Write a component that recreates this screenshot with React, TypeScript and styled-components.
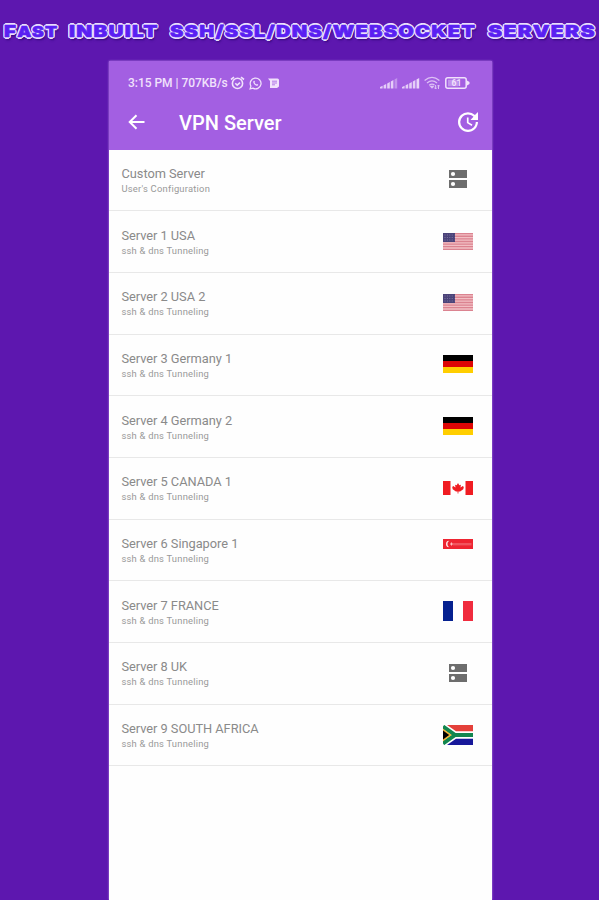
import React from "react";
import styled, { createGlobalStyle } from "styled-components";

const GlobalStyle = createGlobalStyle`
  *, *::before, *::after { box-sizing: border-box; }
  body { margin: 0; background: #5d17af; font-family: Roboto, "Liberation Sans", sans-serif; }
`;

const Page = styled.main`
  display: flex;
  flex-direction: column;
  width: 599px;
  height: 900px;
  overflow: hidden;
  background: #5d17af;
`;

const Headline = styled.h1`
  display: flex;
  height: 61px;
  flex: none;
  margin: 0;
  padding: 20.5px 0 0 4px;
  gap: 9.5px;
  font: 900 16.3px/20px Inter, Roboto, sans-serif;
  color: #5a1ff2;
  white-space: pre;
`;

const Word = styled.span<{ $width: number; $stretch: number }>`
  width: ${(p) => p.$width}px;
  flex: none;

  & > span {
    display: inline-block;
    letter-spacing: 1px;
    transform: scaleX(${(p) => p.$stretch});
    transform-origin: left;
    -webkit-text-stroke: 0.6px #5a1ff2;
    text-shadow:
      1.3px 0 0.5px #eadffd, -1.3px 0 0.5px #eadffd,
      0 1.6px 0.5px #eadffd, 0 -1.6px 0.5px #eadffd,
      1.1px 1.3px 0.5px #eadffd, -1.1px 1.3px 0.5px #eadffd,
      1.1px -1.3px 0.5px #eadffd, -1.1px -1.3px 0.5px #eadffd,
      1px 2.5px 2px #32077a;
  }

  & small { font-size: 14.2px; }
`;

const Phone = styled.section`
  display: flex;
  flex-direction: column;
  flex: 1;
  width: 383px;
  margin-left: 109px;
  background: #fefefe;
  box-shadow: 0 0 2px #b68be6;
`;

const Header = styled.header`
  height: 88.5px;
  flex: none;
  background: #a35fe2;
  color: #fff;
`;

const StatusBar = styled.div`
  display: flex;
  align-items: center;
  justify-content: space-between;
  height: 44px;
  padding: 0 22px 0 19px;
  color: #f1e2fc;
`;

const StatusGroup = styled.div`
  display: flex;
  align-items: center;
`;

const Clock = styled.span`
  width: 102px;
  font-size: 12px;
  font-weight: 500;
  letter-spacing: -0.03px;
  white-space: nowrap;
`;

const Icon = styled.svg<{ $gap?: number }>`
  display: block;
  flex: none;
  margin-right: ${(p) => p.$gap ?? 0}px;
`;

const TitleBar = styled.div`
  display: flex;
  align-items: center;
  height: 34px;
  padding: 0 14px 0 19px;
`;

const Title = styled.h2`
  flex: 1;
  margin: 1px 0 0 34px;
  font-size: 20px;
  font-weight: 500;
  letter-spacing: 0.02px;
`;

const List = styled.ul`
  margin: 0;
  padding: 0;
  list-style: none;
`;

const Row = styled.li`
  display: flex;
  align-items: center;
  justify-content: space-between;
  height: 61.7px;
  padding: 0 19.5px 0 12.5px;
  border-bottom: 1.5px solid #e8e8e8;
`;

const Labels = styled.div`
  display: flex;
  flex-direction: column;
  padding-top: 1px;
`;

const Name = styled.span`
  font-size: 12.8px;
  line-height: 16px;
  letter-spacing: -0.03px;
  color: #8a8a8a;
`;

const Detail = styled.span`
  font-size: 9.4px;
  line-height: 13px;
  letter-spacing: 0.22px;
  color: #999;
`;

const IconSlot = styled.div<{ $raised: boolean }>`
  display: flex;
  justify-content: center;
  width: 30px;
  padding-bottom: ${(p) => (p.$raised ? 11 : 1)}px;
`;

function Signal({ gap, faint }: { gap: number; faint?: boolean }) {
  return (
    <Icon $gap={gap} width="18" height="12" viewBox="0 0 18 12" fill="currentColor">
      <path d="M0 11.5V10l2.6-1.3v2.8zM3.6 8.2l2.6-1.3v4.6H3.6zM7.2 6.4l2.6-1.3v6.4H7.2zM10.8 4.4l2.6-1.3v8.4h-2.6z" opacity=".85" />
      <path d="M14.5 2.5 17.2 1v10.5h-2.7z" opacity={faint ? 0.4 : 0.9} />
    </Icon>
  );
}

function StatusIcons() {
  return (
    <StatusGroup>
      <Signal gap={4} faint />
      <Signal gap={4} />
      <Icon $gap={5} width="16" height="14" viewBox="0 0 16 14" fill="none" stroke="currentColor" strokeWidth="1.3" opacity=".75">
        <path d="M.6 4.6Q8-1.8 15.4 4.6M3 7Q8 2.8 13 7M5.2 9.2Q8 7 10.5 9" />
        <path d="m6.7 10.4 1.3 1.4 1.2-1.4z" fill="currentColor" />
        <path d="M11.6 9v4M10.3 11.6l1.3 1.4 1.3-1.4M14.5 13V9M13.3 10.3 14.5 9l1.2 1.3" strokeWidth="1" />
      </Icon>
      <Icon width="25" height="12" viewBox="0 0 25 12">
        <rect x=".8" y=".8" width="20.4" height="10.4" rx="2" fill="none" stroke="currentColor" strokeWidth="1.5" />
        <path d="M21.5 3.2 24.5 5v2l-3 1.8z" fill="currentColor" />
        <path d="M3 2.7h10v6.6H3z" fill="currentColor" opacity=".4" />
        <text x="6.5" y="9" fontSize="8.5" fontWeight="700" fontFamily="Roboto, sans-serif" fill="currentColor">61</text>
      </Icon>
    </StatusGroup>
  );
}

function NotificationIcons() {
  return (
    <StatusGroup>
      <Clock>3:15 PM | 707KB/s</Clock>
      <Icon $gap={4} width="15" height="14" viewBox="0 0 15 14" fill="none" stroke="currentColor" strokeWidth="1.6">
        <circle cx="7.5" cy="7.4" r="5.1" />
        <path d="m1 3.5 3-2.3M14 3.5l-3-2.3M5.3 7.2l1.9 2 2.8-2.6" />
      </Icon>
      <Icon $gap={6} width="13" height="13" viewBox="0 0 24 24" fill="none" stroke="currentColor" strokeWidth="2.3">
        <path d="m2 22 1.5-5.2A10 10 0 1 1 7.2 20.6z" />
        <path d="M8.5 7.2c-2.7 3.6 3.4 10 7.5 9l1-2.3-2.4-1.2-1.3 1.2-3.2-3.2 1-1.3-1-2.5z" fill="currentColor" stroke="none" />
      </Icon>
      <Icon width="11" height="11" viewBox="0 0 11 11">
        <path d="M0 .5h9.5Q11 .5 11 2v6.5L9 10H2V3z" fill="currentColor" />
        <path d="M4 3.2h5M4 5h5M4 6.8h3" stroke="#a35fe2" strokeWidth=".8" />
      </Icon>
    </StatusGroup>
  );
}

type Kind = "server" | "us" | "de" | "ca" | "sg" | "fr" | "za";

const flagHeights: Record<Kind, number> = { server: 18, us: 17, de: 18, ca: 14, sg: 10, fr: 20, za: 20 };

const artwork: Record<Kind, React.ReactNode> = {
  server: (
    <g>
      <path d="M0 0h18v8H0zM0 10h18v8H0z" fill="#6d6d6d" />
      <circle cx="4" cy="4" r="2.1" fill="#fff" />
      <circle cx="4" cy="14" r="2.1" fill="#fff" />
    </g>
  ),
  us: (
    <g>
      <path d="M0 0h30v17H0z" fill="#f2bfc4" />
      <path d="M0 .65h30M0 3.27h30M0 5.88h30M0 8.5h30M0 11.1h30M0 13.7h30M0 16.35h30" stroke="#db8390" strokeWidth="1.31" />
      <path d="M0 0h12v9H0z" fill="#4b4379" />
      <path d="M1.5 2h10M1.5 4.5h10M1.5 7h10" stroke="#8c85ad" strokeWidth=".8" strokeDasharray="1 1.4" />
    </g>
  ),
  de: (
    <g>
      <path d="M0 0h30v6H0z" />
      <path d="M0 6h30v6H0z" fill="#dd0505" />
      <path d="M0 12h30v6H0z" fill="#ffce00" />
    </g>
  ),
  ca: (
    <g>
      <path d="M0 0h30v14H0z" fill="#fff" />
      <path d="M0 0h7.5v14H0zM22.5 0H30v14h-7.5zM15 2l1.3 2.3 1.6-.5-.4 2.6 2.3-1.3 1 .9-.5 2.2-3.2 2.4H15.4v2h-.8v-2h-1.7L9.7 8.2 9.2 6l1-.9 2.3 1.3-.4-2.6 1.6.5z" fill="#f01c22" />
    </g>
  ),
  sg: (
    <g>
      <path d="M0 0h30v10H0z" fill="#ee2431" />
      <path d="M10 4h18.5v2.4H10z" fill="#fff" opacity=".22" />
      <path d="M6.3 1.8a3.2 3.2 0 1 0 0 6.4 3.6 3.6 0 0 1 0-6.4z" fill="#fff" />
      <path d="M7 5h3M8.5 3.5v3" stroke="#fbb" />
    </g>
  ),
  fr: (
    <g>
      <path d="M0 0h10v20H0z" fill="#062190" />
      <path d="M10 0h10v20H10z" fill="#fff" />
      <path d="M20 0h10v20H20z" fill="#f02c3e" />
    </g>
  ),
  za: (
    <g>
      <path d="M0 0h30v20H0z" fill="#fff" />
      <path d="M4 0h26v6.2H13z" fill="#e4403a" />
      <path d="M4 20h26v-6.2H13z" fill="#17189a" />
      <path d="M0 1.5 12 10 0 18.5M12 10h18" fill="none" stroke="#12864f" strokeWidth="4" />
      <path d="M0 3.7 8.8 10 0 16.3z" fill="#f4b534" />
      <path d="M0 5.5 6.2 10 0 14.5z" />
    </g>
  ),
};

function ServerArt({ kind }: { kind: Kind }) {
  const width = kind === "server" ? 18 : 30;
  const height = flagHeights[kind];
  return (
    <Icon width={width} height={height} viewBox={`0 0 ${width} ${height}`}>
      {artwork[kind]}
    </Icon>
  );
}

const servers: { name: string; detail?: string; kind: Kind }[] = [
  { name: "Custom Server", detail: "User's Configuration", kind: "server" },
  { name: "Server 1 USA", kind: "us" },
  { name: "Server 2 USA 2", kind: "us" },
  { name: "Server 3 Germany 1", kind: "de" },
  { name: "Server 4 Germany 2", kind: "de" },
  { name: "Server 5 CANADA 1", kind: "ca" },
  { name: "Server 6 Singapore 1", kind: "sg" },
  { name: "Server 7 FRANCE", kind: "fr" },
  { name: "Server 8 UK", kind: "server" },
  { name: "Server 9 SOUTH AFRICA", kind: "za" },
];

export default function App() {
  return (
    <Page>
      <GlobalStyle />
      <Headline>
        <Word $width={55} $stretch={1.25}><span>F<small>AST</small></span></Word>
        <Word $width={92} $stretch={1.27}><span>INBUILT</span></Word>
        <Word $width={308} $stretch={1.23}><span>SSH/SSL/DNS/WEBSOCKET</span></Word>
        <Word $width={110} $stretch={1.3}><span>SERVERS</span></Word>
      </Headline>
      <Phone>
        <Header>
          <StatusBar>
            <NotificationIcons />
            <StatusIcons />
          </StatusBar>
          <TitleBar>
            <Icon width="17" height="16" viewBox="0 0 17 16" fill="none" stroke="currentColor" strokeWidth="2">
              <path d="M16.5 8H2M8.5 1.2 1.7 8l6.8 6.8" />
            </Icon>
            <Title>VPN Server</Title>
            <Icon width="20" height="20" viewBox="3 3 18 18" fill="currentColor">
              <path d="M21 10.12h-6.78l2.74-2.82c-2.73-2.7-7.15-2.8-9.88-.1a6.875 6.875 0 0 0 0 9.79 7.02 7.02 0 0 0 9.88 0C18.32 15.65 19 14.08 19 12.1h2c0 1.98-.88 4.55-2.64 6.29-3.51 3.48-9.21 3.48-12.72 0-3.5-3.47-3.53-9.11-.02-12.58a8.987 8.987 0 0 1 12.65 0L21 3zM12.5 8v4.25l3.5 2.08-.72 1.21L11 13V8z" />
            </Icon>
          </TitleBar>
        </Header>
        <List>
          {servers.map(({ name, detail = "ssh & dns Tunneling", kind }) => (
            <Row key={name}>
              <Labels>
                <Name>{name}</Name>
                <Detail>{detail}</Detail>
              </Labels>
              <IconSlot $raised={kind === "sg"}><ServerArt kind={kind} /></IconSlot>
            </Row>
          ))}
        </List>
      </Phone>
    </Page>
  );
}
